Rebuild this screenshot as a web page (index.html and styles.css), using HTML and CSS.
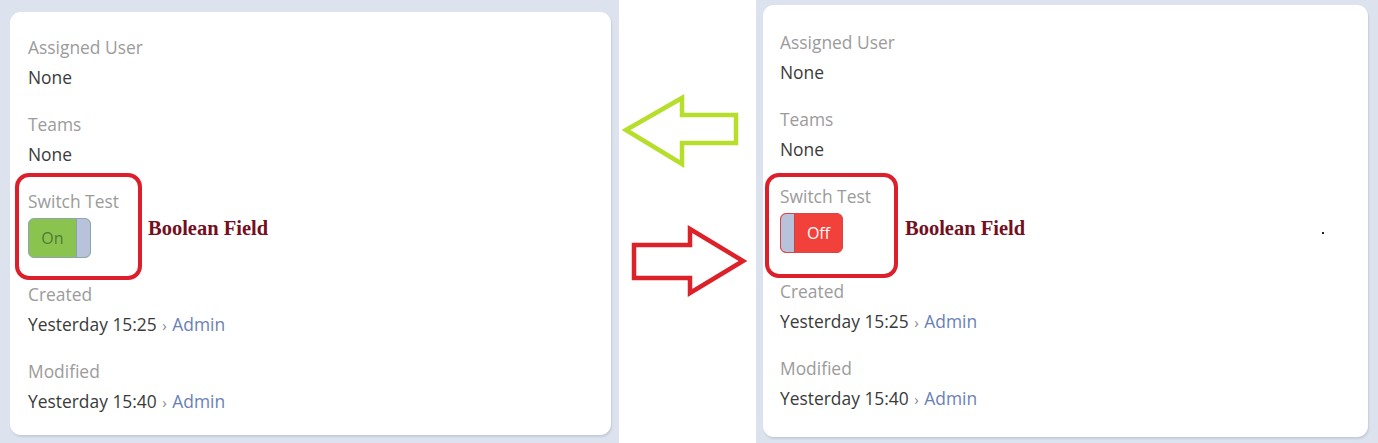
FILE: index.html
```html
<!DOCTYPE html>
<html lang="en">
<head>
<meta charset="utf-8">
<title>Boolean Field switch</title>
<link rel="stylesheet" href="styles.css">
</head>
<body>
<div class="page">
  <section class="panel panel-left">
    <div class="card card-left">
      <div class="field">
        <div class="label">Assigned User</div>
        <div class="value">None</div>
      </div>
      <div class="field">
        <div class="label">Teams</div>
        <div class="value">None</div>
      </div>
      <div class="field field-switch">
        <div class="annot"></div>
        <div class="label">Switch Test</div>
        <div class="switch-row">
          <div class="switch switch-on">
            <span class="switch-text">On</span>
            <span class="knob"></span>
          </div>
          <span class="note">Boolean Field</span>
        </div>
      </div>
      <div class="field">
        <div class="label">Created</div>
        <div class="value">Yesterday 15:25 <span class="sep">›</span> <a class="link">Admin</a></div>
      </div>
      <div class="field">
        <div class="label">Modified</div>
        <div class="value">Yesterday 15:40 <span class="sep">›</span> <a class="link">Admin</a></div>
      </div>
    </div>
  </section>

  <div class="gutter">
    <svg class="arrows" width="137" height="443" viewBox="0 0 137 443" aria-hidden="true">
      <polygon class="arrow-green" points="7,130 63,98 63,115 117,115 117,143 63,143 63,164"/>
      <polygon class="arrow-red" points="15,245 71,245 71,229 124,261 71,293 71,278 15,278"/>
    </svg>
  </div>

  <section class="panel panel-right">
    <div class="card card-right">
      <div class="field">
        <div class="label">Assigned User</div>
        <div class="value">None</div>
      </div>
      <div class="field">
        <div class="label">Teams</div>
        <div class="value">None</div>
      </div>
      <div class="field field-switch">
        <div class="annot"></div>
        <div class="label">Switch Test</div>
        <div class="switch-row">
          <div class="switch switch-off">
            <span class="knob"></span>
            <span class="switch-text">Off</span>
          </div>
          <span class="note">Boolean Field</span>
          <span class="dot"></span>
        </div>
      </div>
      <div class="field">
        <div class="label">Created</div>
        <div class="value">Yesterday 15:25 <span class="sep">›</span> <a class="link">Admin</a></div>
      </div>
      <div class="field">
        <div class="label">Modified</div>
        <div class="value">Yesterday 15:40 <span class="sep">›</span> <a class="link">Admin</a></div>
      </div>
    </div>
  </section>
</div>
</body>
</html>
```

FILE: styles.css
```css
* { box-sizing: border-box; }

html, body {
  margin: 0;
  padding: 0;
  background: #ffffff;
}

body {
  font-family: "Open Sans", "Noto Sans", sans-serif;
  font-size: 17.4px;
  color: #3a3a3a;
}

.page {
  display: flex;
  width: 1378px;
  height: 443px;
}

.panel {
  background: #dce3ee;
  display: flex;
  flex-direction: column;
}

.panel-left {
  width: 619px;
  padding: 12px 8px 8px 10px;
}

.panel-right {
  width: 622px;
  padding: 5px 10px 6px 7px;
}

.gutter {
  width: 137px;
  background: #ffffff;
}

.arrows { display: block; }

.arrow-green {
  fill: none;
  stroke: #b6de2a;
  stroke-width: 4.5;
  stroke-linejoin: miter;
}

.arrow-red {
  fill: none;
  stroke: #dc2128;
  stroke-width: 4.5;
  stroke-linejoin: miter;
}

.card {
  background: #ffffff;
  border-radius: 11px;
  box-shadow: 1px 2px 2px rgba(90, 105, 135, 0.18);
}

.card-left {
  padding: 20px 18px 19px 18px;
}

.card-right {
  padding: 22px 17px 24px 17px;
}

.field {
  margin-bottom: 17px;
}

.field:last-child { margin-bottom: 0; }

.label {
  height: 30px;
  line-height: 30px;
  color: #9b9b9b;
  white-space: nowrap;
}

.value {
  height: 30px;
  line-height: 30px;
  color: #3a3a3a;
  white-space: nowrap;
}

.sep {
  color: #8a8a8a;
  font-size: 15px;
  margin: 0 1px 0 1px;
}

.link {
  color: #6b7fb5;
  text-decoration: none;
}

.field-switch {
  position: relative;
  margin-bottom: 21px;
}

.card-right .field-switch { margin-bottom: 23px; }

.annot {
  position: absolute;
  border: 4px solid #dc1f2b;
  border-radius: 14px;
}

.card-left .annot {
  left: -13px;
  top: -13px;
  width: 127px;
  height: 107px;
}

.card-right .annot {
  left: -15px;
  top: -8px;
  width: 133px;
  height: 105px;
}

.switch-row {
  display: flex;
  align-items: flex-start;
  margin-top: 2px;
}

.switch {
  display: flex;
  width: 63px;
  height: 40px;
  border-radius: 6px;
  overflow: hidden;
  flex-shrink: 0;
}

.switch-on {
  background: #8bc34f;
  border: 1px solid #8ea4b4;
}

.switch-off {
  background: #f2413a;
  border: 1px solid #d6474a;
}

.switch-text {
  flex: 1;
  text-align: center;
  line-height: 38px;
  font-size: 16px;
}

.switch-on .switch-text { color: #4f7b38; }
.switch-off .switch-text { color: #ffffff; }

.knob {
  width: 14px;
  background: #b8c2db;
}

.switch-on .knob {
  border-left: 1px solid #8da1bd;
  border-radius: 0 5px 5px 0;
}

.switch-off .knob {
  border-right: 1px solid #b54a52;
  border-radius: 5px 0 0 5px;
}

.note {
  font-family: "Liberation Serif", "Times New Roman", serif;
  font-weight: bold;
  font-size: 20.5px;
  line-height: 24px;
  color: #760f1d;
  white-space: nowrap;
}

.card-left .note {
  margin-left: 57px;
  margin-top: -2px;
}

.card-right .note {
  margin-left: 62px;
  margin-top: 3px;
}

.dot {
  width: 2px;
  height: 2px;
  background: #222222;
  margin-left: 297px;
  margin-top: 19px;
}
```
